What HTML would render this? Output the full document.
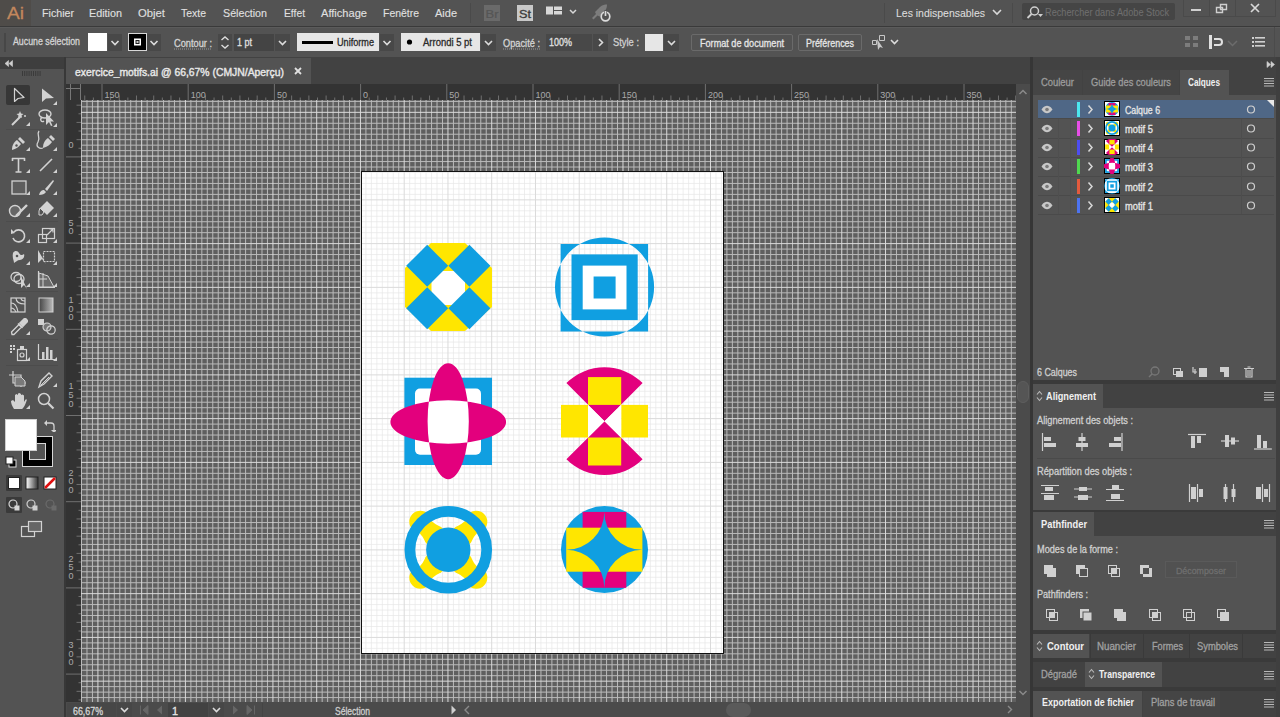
<!DOCTYPE html>
<html><head><meta charset="utf-8">
<style>
*{margin:0;padding:0;box-sizing:border-box}
html,body{width:1280px;height:717px;overflow:hidden;background:#535353}
body{position:relative;font-family:"Liberation Sans",sans-serif}
.a{position:absolute;display:block}
text{font-family:"Liberation Sans",sans-serif}
</style></head><body>
<div class="a" style="left:0px;top:0px;width:1280px;height:26px;background:#535353;"></div>
<div class="a" style="left:0px;top:26px;width:1280px;height:1px;background:#3a3a3a;"></div>
<div class="a" style="left:0px;top:27px;width:1280px;height:30px;background:#535353;"></div>
<div class="a" style="left:0px;top:57px;width:1280px;height:660px;background:#424242;"></div>
<div class="a" style="left:0px;top:57px;width:64px;height:12px;background:#3e3e3e;"></div>
<div class="a" style="left:0px;top:69px;width:64px;height:648px;background:#535353;"></div>
<div class="a" style="left:64px;top:57px;width:2px;height:660px;background:#383838;"></div>
<div class="a" style="left:66px;top:58px;width:245px;height:26px;background:#535353;"></div>
<div class="a" style="left:66px;top:84px;width:950px;height:16px;background:#333333;"></div>
<div class="a" style="left:66px;top:84px;width:15px;height:618px;background:#333333;"></div>
<div class="a" style="left:81px;top:100px;width:935px;height:602px;background:#5f5f5f;"></div>
<svg class="a" style="left:81px;top:100px;" width="935" height="602" viewBox="0 0 935 602"><path d="M0.50 0V602M5.97 0V602M11.44 0V602M22.38 0V602M27.85 0V602M33.32 0V602M38.79 0V602M44.26 0V602M49.73 0V602M55.19 0V602M66.13 0V602M71.60 0V602M77.07 0V602M82.54 0V602M88.01 0V602M93.48 0V602M98.95 0V602M109.89 0V602M115.36 0V602M120.83 0V602M126.30 0V602M131.77 0V602M137.24 0V602M142.71 0V602M153.65 0V602M159.12 0V602M164.59 0V602M170.05 0V602M175.52 0V602M180.99 0V602M186.46 0V602M197.40 0V602M202.87 0V602M208.34 0V602M213.81 0V602M219.28 0V602M224.75 0V602M230.22 0V602M241.16 0V602M246.63 0V602M252.10 0V602M257.57 0V602M263.04 0V602M268.51 0V602M273.98 0V602M284.91 0V602M290.38 0V602M295.85 0V602M301.32 0V602M306.79 0V602M312.26 0V602M317.73 0V602M328.67 0V602M334.14 0V602M339.61 0V602M345.08 0V602M350.55 0V602M356.02 0V602M361.49 0V602M372.43 0V602M377.90 0V602M383.37 0V602M388.83 0V602M394.30 0V602M399.77 0V602M405.24 0V602M416.18 0V602M421.65 0V602M427.12 0V602M432.59 0V602M438.06 0V602M443.53 0V602M449.00 0V602M459.94 0V602M465.41 0V602M470.88 0V602M476.35 0V602M481.82 0V602M487.29 0V602M492.75 0V602M503.69 0V602M509.16 0V602M514.63 0V602M520.10 0V602M525.57 0V602M531.04 0V602M536.51 0V602M547.45 0V602M552.92 0V602M558.39 0V602M563.86 0V602M569.33 0V602M574.80 0V602M580.27 0V602M591.21 0V602M596.68 0V602M602.14 0V602M607.61 0V602M613.08 0V602M618.55 0V602M624.02 0V602M634.96 0V602M640.43 0V602M645.90 0V602M651.37 0V602M656.84 0V602M662.31 0V602M667.78 0V602M678.72 0V602M684.19 0V602M689.66 0V602M695.13 0V602M700.60 0V602M706.07 0V602M711.53 0V602M722.47 0V602M727.94 0V602M733.41 0V602M738.88 0V602M744.35 0V602M749.82 0V602M755.29 0V602M766.23 0V602M771.70 0V602M777.17 0V602M782.64 0V602M788.11 0V602M793.58 0V602M799.05 0V602M809.99 0V602M815.46 0V602M820.92 0V602M826.39 0V602M831.86 0V602M837.33 0V602M842.80 0V602M853.74 0V602M859.21 0V602M864.68 0V602M870.15 0V602M875.62 0V602M881.09 0V602M886.56 0V602M897.50 0V602M902.97 0V602M908.44 0V602M913.91 0V602M919.38 0V602M924.85 0V602M930.32 0V602M0 1.40H935M0 6.87H935M0 17.81H935M0 23.28H935M0 28.75H935M0 34.22H935M0 39.69H935M0 45.16H935M0 50.63H935M0 61.56H935M0 67.03H935M0 72.50H935M0 77.97H935M0 83.44H935M0 88.91H935M0 94.38H935M0 105.32H935M0 110.79H935M0 116.26H935M0 121.73H935M0 127.20H935M0 132.67H935M0 138.14H935M0 149.08H935M0 154.55H935M0 160.02H935M0 165.49H935M0 170.95H935M0 176.42H935M0 181.89H935M0 192.83H935M0 198.30H935M0 203.77H935M0 209.24H935M0 214.71H935M0 220.18H935M0 225.65H935M0 236.59H935M0 242.06H935M0 247.53H935M0 253.00H935M0 258.47H935M0 263.94H935M0 269.41H935M0 280.34H935M0 285.81H935M0 291.28H935M0 296.75H935M0 302.22H935M0 307.69H935M0 313.16H935M0 324.10H935M0 329.57H935M0 335.04H935M0 340.51H935M0 345.98H935M0 351.45H935M0 356.92H935M0 367.86H935M0 373.33H935M0 378.80H935M0 384.26H935M0 389.73H935M0 395.20H935M0 400.67H935M0 411.61H935M0 417.08H935M0 422.55H935M0 428.02H935M0 433.49H935M0 438.96H935M0 444.43H935M0 455.37H935M0 460.84H935M0 466.31H935M0 471.78H935M0 477.25H935M0 482.72H935M0 488.19H935M0 499.12H935M0 504.59H935M0 510.06H935M0 515.53H935M0 521.00H935M0 526.47H935M0 531.94H935M0 542.88H935M0 548.35H935M0 553.82H935M0 559.29H935M0 564.76H935M0 570.23H935M0 575.70H935M0 586.64H935M0 592.11H935M0 597.58H935" stroke="#bababa" stroke-width="1" fill="none"/><path d="M16.91 0V602M60.66 0V602M104.42 0V602M148.18 0V602M191.93 0V602M235.69 0V602M279.44 0V602M323.20 0V602M366.96 0V602M410.71 0V602M454.47 0V602M498.22 0V602M541.98 0V602M585.74 0V602M629.49 0V602M673.25 0V602M717.00 0V602M760.76 0V602M804.52 0V602M848.27 0V602M892.03 0V602M0 12.34H935M0 56.09H935M0 99.85H935M0 143.61H935M0 187.36H935M0 231.12H935M0 274.88H935M0 318.63H935M0 362.39H935M0 406.14H935M0 449.90H935M0 493.65H935M0 537.41H935M0 581.17H935" stroke="#dadada" stroke-width="1" fill="none"/></svg>
<svg class="a" style="left:66px;top:84px;" width="950" height="16" viewBox="0 0 950 16"><path d="M18.76 11.5V16M27.38 13.5V16M36.00 0V16M44.62 13.5V16M53.24 11.5V16M61.86 13.5V16M70.48 11.5V16M79.10 13.5V16M87.72 11.5V16M96.34 13.5V16M104.96 11.5V16M113.58 13.5V16M122.20 0V16M130.82 13.5V16M139.44 11.5V16M148.06 13.5V16M156.68 11.5V16M165.30 13.5V16M173.92 11.5V16M182.54 13.5V16M191.16 11.5V16M199.78 13.5V16M208.40 0V16M217.02 13.5V16M225.64 11.5V16M234.26 13.5V16M242.88 11.5V16M251.50 13.5V16M260.12 11.5V16M268.74 13.5V16M277.36 11.5V16M285.98 13.5V16M294.60 0V16M303.22 13.5V16M311.84 11.5V16M320.46 13.5V16M329.08 11.5V16M337.70 13.5V16M346.32 11.5V16M354.94 13.5V16M363.56 11.5V16M372.18 13.5V16M380.80 0V16M389.42 13.5V16M398.04 11.5V16M406.66 13.5V16M415.28 11.5V16M423.90 13.5V16M432.52 11.5V16M441.14 13.5V16M449.76 11.5V16M458.38 13.5V16M467.00 0V16M475.62 13.5V16M484.24 11.5V16M492.86 13.5V16M501.48 11.5V16M510.10 13.5V16M518.72 11.5V16M527.34 13.5V16M535.96 11.5V16M544.58 13.5V16M553.20 0V16M561.82 13.5V16M570.44 11.5V16M579.06 13.5V16M587.68 11.5V16M596.30 13.5V16M604.92 11.5V16M613.54 13.5V16M622.16 11.5V16M630.78 13.5V16M639.40 0V16M648.02 13.5V16M656.64 11.5V16M665.26 13.5V16M673.88 11.5V16M682.50 13.5V16M691.12 11.5V16M699.74 13.5V16M708.36 11.5V16M716.98 13.5V16M725.60 0V16M734.22 13.5V16M742.84 11.5V16M751.46 13.5V16M760.08 11.5V16M768.70 13.5V16M777.32 11.5V16M785.94 13.5V16M794.56 11.5V16M803.18 13.5V16M811.80 0V16M820.42 13.5V16M829.04 11.5V16M837.66 13.5V16M846.28 11.5V16M854.90 13.5V16M863.52 11.5V16M872.14 13.5V16M880.76 11.5V16M889.38 13.5V16M898.00 0V16M906.62 13.5V16M915.24 11.5V16M923.86 13.5V16M932.48 11.5V16M941.10 13.5V16M949.72 11.5V16" stroke="#707070" stroke-width="1" fill="none"/></svg>
<svg class="a" style="left:66px;top:84px;" width="15" height="618" viewBox="0 0 15 618"><path d="M10.5 21.18H15M12.5 29.80H15M10.5 38.42H15M12.5 47.04H15M10.5 55.66H15M12.5 64.28H15M0 72.90H15M12.5 81.52H15M10.5 90.14H15M12.5 98.76H15M10.5 107.38H15M12.5 116.00H15M10.5 124.62H15M12.5 133.24H15M10.5 141.86H15M12.5 150.48H15M0 159.10H15M12.5 167.72H15M10.5 176.34H15M12.5 184.96H15M10.5 193.58H15M12.5 202.20H15M10.5 210.82H15M12.5 219.44H15M10.5 228.06H15M12.5 236.68H15M0 245.30H15M12.5 253.92H15M10.5 262.54H15M12.5 271.16H15M10.5 279.78H15M12.5 288.40H15M10.5 297.02H15M12.5 305.64H15M10.5 314.26H15M12.5 322.88H15M0 331.50H15M12.5 340.12H15M10.5 348.74H15M12.5 357.36H15M10.5 365.98H15M12.5 374.60H15M10.5 383.22H15M12.5 391.84H15M10.5 400.46H15M12.5 409.08H15M0 417.70H15M12.5 426.32H15M10.5 434.94H15M12.5 443.56H15M10.5 452.18H15M12.5 460.80H15M10.5 469.42H15M12.5 478.04H15M10.5 486.66H15M12.5 495.28H15M0 503.90H15M12.5 512.52H15M10.5 521.14H15M12.5 529.76H15M10.5 538.38H15M12.5 547.00H15M10.5 555.62H15M12.5 564.24H15M10.5 572.86H15M12.5 581.48H15M0 590.10H15M12.5 598.72H15M10.5 607.34H15M12.5 615.96H15" stroke="#707070" stroke-width="1" fill="none"/></svg>
<svg class="a" style="left:66px;top:84px;" width="15" height="16" viewBox="0 0 15 16"><path d="M4.5 0V16M0 4.5H15M14.5 0V16" stroke="#777" stroke-width="1" fill="none"/></svg>
<div class="a" style="left:361px;top:171px;width:363px;height:483px;background:#fff;border:1px solid #111"></div>
<svg class="a" style="left:362px;top:172px;" width="361" height="481" viewBox="0 0 361 481"><path d="M3.91 0V481M9.38 0V481M14.85 0V481M20.32 0V481M25.79 0V481M31.26 0V481M36.73 0V481M47.67 0V481M53.14 0V481M58.61 0V481M64.08 0V481M69.55 0V481M75.02 0V481M80.49 0V481M91.43 0V481M96.90 0V481M102.37 0V481M107.83 0V481M113.30 0V481M118.77 0V481M124.24 0V481M135.18 0V481M140.65 0V481M146.12 0V481M151.59 0V481M157.06 0V481M162.53 0V481M168.00 0V481M178.94 0V481M184.41 0V481M189.88 0V481M195.35 0V481M200.82 0V481M206.29 0V481M211.75 0V481M222.69 0V481M228.16 0V481M233.63 0V481M239.10 0V481M244.57 0V481M250.04 0V481M255.51 0V481M266.45 0V481M271.92 0V481M277.39 0V481M282.86 0V481M288.33 0V481M293.80 0V481M299.27 0V481M310.21 0V481M315.68 0V481M321.14 0V481M326.61 0V481M332.08 0V481M337.55 0V481M343.02 0V481M353.96 0V481M359.43 0V481M0 0.50H361M0 5.97H361M0 11.44H361M0 16.91H361M0 22.38H361M0 33.32H361M0 38.79H361M0 44.26H361M0 49.73H361M0 55.20H361M0 60.67H361M0 66.14H361M0 77.08H361M0 82.55H361M0 88.02H361M0 93.49H361M0 98.95H361M0 104.42H361M0 109.89H361M0 120.83H361M0 126.30H361M0 131.77H361M0 137.24H361M0 142.71H361M0 148.18H361M0 153.65H361M0 164.59H361M0 170.06H361M0 175.53H361M0 181.00H361M0 186.47H361M0 191.94H361M0 197.41H361M0 208.34H361M0 213.81H361M0 219.28H361M0 224.75H361M0 230.22H361M0 235.69H361M0 241.16H361M0 252.10H361M0 257.57H361M0 263.04H361M0 268.51H361M0 273.98H361M0 279.45H361M0 284.92H361M0 295.86H361M0 301.33H361M0 306.80H361M0 312.26H361M0 317.73H361M0 323.20H361M0 328.67H361M0 339.61H361M0 345.08H361M0 350.55H361M0 356.02H361M0 361.49H361M0 366.96H361M0 372.43H361M0 383.37H361M0 388.84H361M0 394.31H361M0 399.78H361M0 405.25H361M0 410.72H361M0 416.19H361M0 427.12H361M0 432.59H361M0 438.06H361M0 443.53H361M0 449.00H361M0 454.47H361M0 459.94H361M0 470.88H361M0 476.35H361" stroke="#e6e6e6" stroke-width="0.7" fill="none"/><path d="M42.20 0V481M85.96 0V481M129.71 0V481M173.47 0V481M217.22 0V481M260.98 0V481M304.74 0V481M348.49 0V481M0 27.85H361M0 71.61H361M0 115.36H361M0 159.12H361M0 202.88H361M0 246.63H361M0 290.39H361M0 334.14H361M0 377.90H361M0 421.65H361M0 465.41H361" stroke="#dadada" stroke-width="1" fill="none"/></svg>
<svg class="a" style="left:0px;top:0px;" width="1280" height="717" viewBox="0 0 1280 717"><polygon points="431,243 465,243 492,268 492,307 465,331 431,331 405,307 405,268" fill="#ffe600"/>
<rect x="431.5" y="271" width="33.5" height="34" fill="#fff"/>
<g fill="#109fe1">
<polygon points="406.2,265.8 427.2,244.8 448.2,265.8 427.2,286.8"/>
<polygon points="448.4,265.8 469.4,244.8 490.4,265.8 469.4,286.8"/>
<polygon points="406.2,308.2 427.2,287.2 448.2,308.2 427.2,329.2"/>
<polygon points="448.4,308.2 469.4,287.2 490.4,308.2 469.4,329.2"/>
</g><path fill-rule="evenodd" fill="#109fe1" d="M560.6 244H648.1V331.4H560.6Z M654.1 287 A49.5 49.5 0 1 1 555 287 A49.5 49.5 0 1 1 654.1 287Z"/>
<rect x="571.5" y="254.4" width="66.2" height="65.7" fill="#109fe1"/>
<rect x="582.7" y="265.6" width="43.8" height="43.8" fill="#fff"/>
<rect x="593.6" y="276.5" width="22" height="22" fill="#109fe1"/><rect x="404.4" y="377.7" width="87.6" height="87.3" fill="#109fe1"/>
<rect x="415" y="388.5" width="66" height="66.2" rx="5" fill="#fff"/>
<path fill-rule="evenodd" fill="#e3007d" d="M468.8 421.2A20.6 58 0 1 1 427.6 421.2A20.6 58 0 1 1 468.8 421.2Z M506.1 422A57.8 21.7 0 1 1 390.4 422A57.8 21.7 0 1 1 506.1 422Z"/><path fill="#e3007d" d="M604.5 421.2L566.4 383.1A54 54 0 0 1 642.6 383.1Z M604.5 421.2L566.4 459.3A54 54 0 0 0 642.6 459.3Z"/>
<g fill="#ffe600">
<rect x="588" y="377.1" width="33.2" height="27.8"/>
<rect x="561" y="404.9" width="27" height="32.6"/>
<rect x="621.2" y="404.9" width="26.8" height="32.6"/>
<rect x="588" y="437.5" width="33.2" height="28"/>
</g>
<path fill="#fff" d="M588 404.9L604.5 421.2L588 437.5Z M621.2 404.9L604.5 421.2L621.2 437.5Z"/><mask id="c5" maskUnits="userSpaceOnUse" x="0" y="0" width="1280" height="717"><path d="M420.3 521.8L476.3 577.8M476.3 521.8L420.3 577.8" stroke="#fff" stroke-width="23" stroke-linecap="round" fill="none"/></mask>
<path d="M420.3 521.8L476.3 577.8M476.3 521.8L420.3 577.8" stroke="#ffe600" stroke-width="22" stroke-linecap="round" fill="none"/>
<g mask="url(#c5)" fill="#fff">
<circle cx="448.3" cy="504.99999999999994" r="23.1"/><circle cx="448.3" cy="594.5999999999999" r="23.1"/><circle cx="403.5" cy="549.8" r="23.1"/><circle cx="493.1" cy="549.8" r="23.1"/>
</g>
<circle cx="448.3" cy="549.8" r="38.4" fill="none" stroke="#109fe1" stroke-width="10.8"/>
<circle cx="448.3" cy="549.8" r="22.2" fill="#109fe1"/><circle cx="604.5" cy="549.6" r="43.5" fill="#109fe1"/>
<rect x="582.6" y="511.9" width="43.7" height="75.9" fill="#e3007d"/>
<rect x="566.2" y="527.7" width="76.2" height="44" fill="#ffe600"/>
<path fill="#109fe1" d="M604.3 511.9A38.2 37.9 0 0 0 642.4 549.8A38.2 37.9 0 0 0 604.3 587.8A38.2 37.9 0 0 0 566.2 549.8A38.2 37.9 0 0 0 604.3 511.9Z"/></svg>
<div class="a" style="left:0px;top:0px;width:31px;height:26px;background:#4f4c49;"></div>
<div class="a" style="left:470px;top:3px;width:1px;height:20px;background:#4a4a4a;"></div>
<div class="a" style="left:484px;top:5px;width:16px;height:16px;background:#6a6a6a;"></div>
<div class="a" style="left:517px;top:5px;width:16px;height:16px;background:#c8c8c8;"></div>
<svg class="a" style="left:544px;top:4px;" width="36" height="18" viewBox="0 0 36 18"><path d="M2 2.5h7v8H2zM10 2.5h8v3.5h-8zM10 7h8v3.5h-8z" fill="#d8d8d8"/><path d="M26 6l3 3 3-3" stroke="#d8d8d8" stroke-width="1.5" fill="none"/></svg>
<svg class="a" style="left:590px;top:2px;" width="24" height="22" viewBox="0 0 24 22"><path d="M2 16L6 12L5 10L10 5C12 3 15 2.5 17 2.5C17 4.5 16.5 7.5 14.5 9.5L9.5 14.5L7.5 13.5L3.5 17.5Z" fill="#7c7c7c"/><circle cx="15.5" cy="14.5" r="4.3" stroke="#dcdcdc" stroke-width="1.7" fill="#535353"/><path d="M15.5 8.5v5" stroke="#535353" stroke-width="3"/><path d="M15.5 9v5" stroke="#dcdcdc" stroke-width="1.7"/></svg>
<div class="a" style="left:884px;top:3px;width:1px;height:20px;background:#4a4a4a;"></div>
<svg class="a" style="left:990px;top:6px;" width="14" height="12" viewBox="0 0 14 12"><path d="M3 4l4 4 4-4" stroke="#d8d8d8" stroke-width="1.6" fill="none"/></svg>
<div class="a" style="left:1012px;top:3px;width:1px;height:20px;background:#4a4a4a;"></div>
<div class="a" style="left:1022px;top:3px;width:153px;height:17px;background:#454545;border-radius:2px"></div>
<svg class="a" style="left:1026px;top:5px;" width="18" height="14" viewBox="0 0 18 14"><circle cx="8.5" cy="6" r="4" stroke="#cfcfcf" stroke-width="1.5" fill="none"/><path d="M5.5 9l-4 4" stroke="#cfcfcf" stroke-width="1.8"/><path d="M12 9h5l-2.5 3z" fill="#cfcfcf"/></svg>
<div class="a" style="left:1183px;top:0px;width:1px;height:16px;background:#4a4a4a;"></div>
<div class="a" style="left:1209px;top:0px;width:1px;height:16px;background:#4a4a4a;"></div>
<div class="a" style="left:1235px;top:0px;width:1px;height:16px;background:#4a4a4a;"></div>
<div class="a" style="left:1275px;top:0px;width:1px;height:16px;background:#4a4a4a;"></div>
<div class="a" style="left:1183px;top:16px;width:93px;height:1px;background:#4a4a4a;"></div>
<div class="a" style="left:1191px;top:9px;width:10px;height:2px;background:#d0d0d0;"></div>
<svg class="a" style="left:1214px;top:2px;" width="16" height="14" viewBox="0 0 16 14"><path d="M6.5 2.5h6v5h-6zM2.5 5.5h6v5h-6z" stroke="#cfcfcf" stroke-width="1.4" fill="#535353"/></svg>
<svg class="a" style="left:1249px;top:2px;" width="12" height="12" viewBox="0 0 12 12"><path d="M2 2l8 8M10 2l-8 8" stroke="#d8d8d8" stroke-width="1.7"/></svg>
<div class="a" style="left:0px;top:27px;width:1280px;height:1px;background:#5b5b5b;"></div>
<div class="a" style="left:4px;top:33px;width:2px;height:19px;background:#474747;"></div>
<div class="a" style="left:88px;top:33px;width:19px;height:18px;background:#ffffff;"></div>
<div class="a" style="left:108px;top:34px;width:14px;height:17px;background:#484848;"></div>
<svg class="a" style="left:108px;top:34px;" width="14" height="17" viewBox="0 0 14 17"><path d="M3.5 7.0l3.5 3.5 3.5-3.5" stroke="#dcdcdc" stroke-width="1.6" fill="none"/></svg>
<div class="a" style="left:128px;top:33px;width:19px;height:18px;background:#000;border:1px solid #d8d8d8"></div>
<svg class="a" style="left:128px;top:33px;" width="19" height="18" viewBox="0 0 19 18"><rect x="6" y="5.5" width="7" height="7" fill="#fff"/><rect x="7.5" y="7" width="4" height="4" fill="#222"/><rect x="8.5" y="8" width="2" height="2" fill="#ccc"/></svg>
<div class="a" style="left:147px;top:34px;width:14px;height:17px;background:#484848;"></div>
<svg class="a" style="left:147px;top:34px;" width="14" height="17" viewBox="0 0 14 17"><path d="M3.5 7.0l3.5 3.5 3.5-3.5" stroke="#dcdcdc" stroke-width="1.6" fill="none"/></svg>
<svg class="a" style="left:174px;top:48px;" width="38" height="2" viewBox="0 0 38 2"><path d="M0 1H38" stroke="#9a9a9a" stroke-width="1" stroke-dasharray="1 1"/></svg>
<div class="a" style="left:218px;top:34px;width:14px;height:17px;background:#484848;"></div>
<svg class="a" style="left:218px;top:34px;" width="14" height="17" viewBox="0 0 14 17"><path d="M3.5 6l3.5-3 3.5 3M3.5 11l3.5 3 3.5-3" stroke="#dcdcdc" stroke-width="1.4" fill="none"/></svg>
<div class="a" style="left:234px;top:34px;width:40px;height:17px;background:#444;"></div>
<div class="a" style="left:275px;top:34px;width:15px;height:17px;background:#484848;"></div>
<svg class="a" style="left:275px;top:34px;" width="15" height="17" viewBox="0 0 15 17"><path d="M4.0 7.0l3.5 3.5 3.5-3.5" stroke="#dcdcdc" stroke-width="1.6" fill="none"/></svg>
<div class="a" style="left:297px;top:33px;width:82px;height:18px;background:#e6e6e6;"></div>
<div class="a" style="left:302px;top:41px;width:31px;height:3px;background:#000;"></div>
<div class="a" style="left:380px;top:34px;width:14px;height:17px;background:#484848;"></div>
<svg class="a" style="left:380px;top:34px;" width="14" height="17" viewBox="0 0 14 17"><path d="M3.5 7.0l3.5 3.5 3.5-3.5" stroke="#dcdcdc" stroke-width="1.6" fill="none"/></svg>
<div class="a" style="left:401px;top:33px;width:79px;height:18px;background:#e6e6e6;"></div>
<svg class="a" style="left:405px;top:37px;" width="10" height="10" viewBox="0 0 10 10"><circle cx="4.5" cy="5" r="2.6" fill="#000"/></svg>
<div class="a" style="left:481px;top:34px;width:15px;height:17px;background:#484848;"></div>
<svg class="a" style="left:481px;top:34px;" width="15" height="17" viewBox="0 0 15 17"><path d="M4.0 7.0l3.5 3.5 3.5-3.5" stroke="#dcdcdc" stroke-width="1.6" fill="none"/></svg>
<svg class="a" style="left:503px;top:48px;" width="37" height="2" viewBox="0 0 37 2"><path d="M0 1H37" stroke="#9a9a9a" stroke-width="1" stroke-dasharray="1 1"/></svg>
<div class="a" style="left:546px;top:34px;width:46px;height:17px;background:#484848;"></div>
<div class="a" style="left:593px;top:34px;width:15px;height:17px;background:#484848;"></div>
<svg class="a" style="left:593px;top:34px;" width="15" height="17" viewBox="0 0 15 17"><path d="M6 5l3.5 3.5L6 12" stroke="#dcdcdc" stroke-width="1.6" fill="none"/></svg>
<div class="a" style="left:645px;top:34px;width:18px;height:17px;background:#e6e6e6;"></div>
<div class="a" style="left:664px;top:34px;width:15px;height:17px;background:#484848;"></div>
<svg class="a" style="left:664px;top:34px;" width="15" height="17" viewBox="0 0 15 17"><path d="M4.0 7.0l3.5 3.5 3.5-3.5" stroke="#dcdcdc" stroke-width="1.6" fill="none"/></svg>
<div class="a" style="left:691px;top:34px;width:102px;height:17px;background:#535353;border:1px solid #6a6a6a;border-radius:2px"></div>
<div class="a" style="left:798px;top:34px;width:64px;height:17px;background:#535353;border:1px solid #6a6a6a;border-radius:2px"></div>
<svg class="a" style="left:869px;top:33px;" width="34" height="18" viewBox="0 0 34 18"><path d="M3.5 7.5h4v4h-4zM10.5 2.5h5v5h-5z" stroke="#c8c8c8" stroke-width="1" fill="none"/><path d="M8 6l6 9-3-1-2 3z" fill="#c8c8c8"/><path d="M22 7l3.5 3.5L29 7" stroke="#dcdcdc" stroke-width="1.6" fill="none"/></svg>
<svg class="a" style="left:1184px;top:35px;" width="16" height="13" viewBox="0 0 16 13"><g fill="#7c7c7c"><rect x="1" y="1" width="5" height="4"/><rect x="9" y="1" width="5" height="4"/><rect x="1" y="8" width="5" height="4"/><rect x="9" y="8" width="5" height="4"/></g></svg>
<svg class="a" style="left:1208px;top:34px;" width="16" height="16" viewBox="0 0 16 16"><path d="M1 1h3v14H1z" fill="#e0e0e0"/><path d="M6 5h5a3 3 0 0 1 0 6H6" stroke="#e0e0e0" stroke-width="2" fill="none"/></svg>
<svg class="a" style="left:1226px;top:38px;" width="14" height="10" viewBox="0 0 14 10"><path d="M2 3l4.5 4.5L11 3" stroke="#6c6c6c" stroke-width="1.5" fill="none"/></svg>
<svg class="a" style="left:1251px;top:35px;" width="16" height="14" viewBox="0 0 16 14"><g fill="#d0d0d0"><rect x="1" y="2" width="2" height="2"/><rect x="4" y="2" width="10" height="1.6"/><rect x="1" y="6" width="2" height="2"/><rect x="4" y="6" width="10" height="1.6"/><rect x="1" y="10" width="2" height="2"/><rect x="4" y="10" width="10" height="1.6"/></g></svg>
<div class="a" style="left:1274px;top:27px;width:1px;height:30px;background:#4b4b4b;"></div>
<svg class="a" style="left:292px;top:65px;" width="12" height="12" viewBox="0 0 12 12"><path d="M3 3l6 6M9 3l-6 6" stroke="#e0e0e0" stroke-width="1.8"/></svg>
<svg class="a" style="left:4px;top:59px;" width="10" height="9" viewBox="0 0 10 9"><path d="M4.5 1.5L1 4.5L4.5 7.5ZM8.5 1.5L5 4.5L8.5 7.5Z" fill="#cfcfcf" stroke="#cfcfcf" stroke-width="0.6"/></svg>
<svg class="a" style="left:22px;top:71px;" width="20" height="6" viewBox="0 0 20 6"><rect x="0.0" y="0" width="1" height="5" fill="#3a3a3a"/><rect x="2.2" y="0" width="1" height="5" fill="#3a3a3a"/><rect x="4.4" y="0" width="1" height="5" fill="#3a3a3a"/><rect x="6.6" y="0" width="1" height="5" fill="#3a3a3a"/><rect x="8.8" y="0" width="1" height="5" fill="#3a3a3a"/><rect x="11.0" y="0" width="1" height="5" fill="#3a3a3a"/><rect x="13.2" y="0" width="1" height="5" fill="#3a3a3a"/><rect x="15.4" y="0" width="1" height="5" fill="#3a3a3a"/><rect x="17.6" y="0" width="1" height="5" fill="#3a3a3a"/></svg>
<div class="a" style="left:6px;top:85px;width:24px;height:20px;background:#373737;border-radius:2px"></div>
<svg class="a" style="left:10px;top:87px;" width="16" height="17" viewBox="0 0 16 17"><path d="M4.5 1.5V14.5L8 11.5L14 10.5Z" stroke="#d2d2d2" stroke-width="1.2" fill="none" stroke-linejoin="round"/></svg>
<svg class="a" style="left:40px;top:87px;" width="18" height="17" viewBox="0 0 18 17"><path d="M2 1.5V15L6 11.5L14 11Z" fill="#d2d2d2"/></svg>
<svg class="a" style="left:10px;top:109px;" width="18" height="18" viewBox="0 0 18 18"><path d="M2 16L11 7" stroke="#d2d2d2" stroke-width="2"/><path d="M10 2l1 2.5 2.5.5-2 1.5.5 2.5-2-1.5-2 1.5.5-2.5-2-1.5 2.5-.5z" fill="#d2d2d2"/><circle cx="15" cy="7" r="1" fill="#d2d2d2"/></svg>
<svg class="a" style="left:37px;top:108px;" width="20" height="19" viewBox="0 0 20 19"><ellipse cx="8" cy="6" rx="6" ry="4" stroke="#d2d2d2" stroke-width="1.4" fill="none"/><path d="M5 9c-3 3 0 6 2 4" stroke="#d2d2d2" stroke-width="1.3" fill="none"/><path d="M9 5V17L12 14L14 18L15.5 17.5L13.5 13.5H17Z" fill="#d2d2d2"/></svg>
<svg class="a" style="left:10px;top:135px;" width="17" height="17" viewBox="0 0 17 17"><path d="M2 15C2 10 4 7 7 5L11 9C9 12 6 14 2 15Z" fill="#d2d2d2"/><path d="M8 4L10 2L15 7L13 9Z" fill="#d2d2d2"/><circle cx="6.5" cy="10.5" r="1.2" fill="#535353"/></svg>
<svg class="a" style="left:35px;top:130px;" width="20" height="22" viewBox="0 0 20 22"><path d="M4 1c-3 4 2 6-1 11s2 7 5 6" stroke="#d2d2d2" stroke-width="1.3" fill="none"/><path d="M8 18C8 13 10 10 13 8L17 12C15 15 12 17 8 18Z" fill="#d2d2d2"/><path d="M14 7L16 5L20 9L18 11Z" fill="#d2d2d2"/></svg>
<svg class="a" style="left:11px;top:157px;" width="15" height="16" viewBox="0 0 15 16"><path d="M1 1.5H14M7.5 1.5V15M4.5 15H10.5M1.5 1V4M13.5 1V4" stroke="#d2d2d2" stroke-width="1.6" fill="none"/></svg>
<svg class="a" style="left:38px;top:157px;" width="16" height="16" viewBox="0 0 16 16"><path d="M2 14L14 2" stroke="#d2d2d2" stroke-width="1.6"/></svg>
<svg class="a" style="left:11px;top:180px;" width="16" height="15" viewBox="0 0 16 15"><rect x="1" y="1" width="14" height="13" stroke="#d2d2d2" stroke-width="1.3" fill="#5e5e5e"/></svg>
<svg class="a" style="left:37px;top:179px;" width="18" height="17" viewBox="0 0 18 17"><path d="M2 16C3 12 5 11 7 11L9 13C8 15 5 16 2 16Z" fill="#d2d2d2"/><path d="M8 10L16 1L17 2L10 12Z" fill="#d2d2d2"/></svg>
<svg class="a" style="left:8px;top:202px;" width="21" height="16" viewBox="0 0 21 16"><circle cx="7" cy="9" r="5.5" stroke="#d2d2d2" stroke-width="1.4" fill="#666"/><path d="M8 14L19 3" stroke="#d2d2d2" stroke-width="2.4"/></svg>
<svg class="a" style="left:38px;top:200px;" width="17" height="17" viewBox="0 0 17 17"><path d="M9 1L16 8L9 15L2 8Z" fill="#d2d2d2"/><path d="M2 8L6 12L4 15H1V11Z" stroke="#d2d2d2" stroke-width="1" fill="#535353"/></svg>
<svg class="a" style="left:10px;top:227px;" width="17" height="18" viewBox="0 0 17 18"><path d="M4 5A6 6 0 1 1 3 11" stroke="#d2d2d2" stroke-width="1.6" fill="none"/><path d="M1 2L5 6L1 7Z" fill="#d2d2d2"/></svg>
<svg class="a" style="left:37px;top:226px;" width="20" height="19" viewBox="0 0 20 19"><rect x="1.5" y="8.5" width="8" height="8" stroke="#d2d2d2" stroke-width="1.2" fill="none"/><rect x="5.5" y="2.5" width="12" height="10" stroke="#d2d2d2" stroke-width="1.2" fill="none"/><path d="M10 9L16 3M12.5 3H16V6.5" stroke="#d2d2d2" stroke-width="1.2" fill="none"/></svg>
<svg class="a" style="left:10px;top:248px;" width="18" height="17" viewBox="0 0 18 17"><path d="M3 5c2-3 5-2 6 0s3 3 5 1c1 3-1 6-4 6s-4 2-6 3c0-3-2-5-1-10z" fill="#d2d2d2"/><circle cx="7" cy="8" r="1.3" fill="#535353"/></svg>
<svg class="a" style="left:37px;top:248px;" width="20" height="18" viewBox="0 0 20 18"><path d="M1 2V15L5 11L9 16Z" fill="#d2d2d2"/><rect x="6.5" y="3.5" width="11" height="10" stroke="#d2d2d2" stroke-width="1.2" stroke-dasharray="2 1" fill="none"/></svg>
<svg class="a" style="left:10px;top:270px;" width="19" height="19" viewBox="0 0 19 19"><ellipse cx="6" cy="7" rx="5" ry="4.5" stroke="#d2d2d2" stroke-width="1.3" fill="none"/><ellipse cx="9" cy="9" rx="5" ry="4.5" stroke="#d2d2d2" stroke-width="1.3" fill="none"/><path d="M11 6V18L14 15L17 19Z" fill="#d2d2d2"/></svg>
<svg class="a" style="left:37px;top:270px;" width="20" height="19" viewBox="0 0 20 19"><path d="M1.5 1V17.5H18" stroke="#d2d2d2" stroke-width="1.2" fill="none"/><path d="M2 3L11 6L17 17H2Z" stroke="#d2d2d2" stroke-width="1" fill="#6a6a6a"/><path d="M2 9H10M6 3V17" stroke="#d2d2d2" stroke-width="1"/></svg>
<svg class="a" style="left:10px;top:297px;" width="16" height="16" viewBox="0 0 16 16"><rect x="1" y="1" width="14" height="14" stroke="#d2d2d2" stroke-width="1.2" fill="none"/><path d="M1 6c4 0 6 3 7 9M1 11c3 0 4 2 5 4M6 1c0 4 4 6 9 6M11 1c0 2 2 3 4 3" stroke="#d2d2d2" stroke-width="1.1" fill="none"/></svg>
<svg class="a" style="left:38px;top:297px;" width="16" height="16" viewBox="0 0 16 16"><defs><linearGradient id="gt"><stop offset="0" stop-color="#444"/><stop offset="1" stop-color="#bbb"/></linearGradient></defs><rect x="1" y="1" width="14" height="14" fill="url(#gt)" stroke="#d2d2d2" stroke-width="1"/></svg>
<svg class="a" style="left:9px;top:318px;" width="19" height="19" viewBox="0 0 19 19"><path d="M3 16.5L2.5 14L10 6.5L12.5 9L5 16.5Z" stroke="#d2d2d2" stroke-width="1.3" fill="none" stroke-linejoin="round"/><path d="M9 5.5L13.5 10M11 5L14.5 1.5A2 2 0 0 1 17.5 4.5L14 8Z" stroke="#d2d2d2" stroke-width="1.6" fill="#d2d2d2"/></svg>
<svg class="a" style="left:37px;top:318px;" width="19" height="18" viewBox="0 0 19 18"><rect x="1" y="1" width="6" height="6" fill="#d2d2d2"/><circle cx="10" cy="9" r="4" stroke="#d2d2d2" stroke-width="1.2" fill="#777"/><circle cx="14" cy="12" r="4.2" stroke="#d2d2d2" stroke-width="1.2" fill="none"/></svg>
<svg class="a" style="left:9px;top:344px;" width="19" height="18" viewBox="0 0 19 18"><g fill="#d2d2d2"><rect x="1" y="1" width="2" height="2"/><rect x="4" y="1" width="2" height="2"/><rect x="1" y="4" width="2" height="2"/><rect x="4" y="4" width="2" height="2"/><rect x="1" y="7" width="2" height="2"/></g><rect x="8.5" y="5.5" width="9" height="11" stroke="#d2d2d2" stroke-width="1.2" fill="none"/><rect x="11" y="2" width="4" height="3.5" fill="#d2d2d2"/><circle cx="13" cy="11" r="2" stroke="#d2d2d2" stroke-width="1.2" fill="none"/></svg>
<svg class="a" style="left:37px;top:343px;" width="19" height="18" viewBox="0 0 19 18"><path d="M1.5 1V16.5H18" stroke="#d2d2d2" stroke-width="1.2" fill="none"/><rect x="5" y="9" width="2.5" height="7" fill="#d2d2d2"/><rect x="9" y="4" width="2.5" height="12" fill="#d2d2d2"/><rect x="13" y="7" width="2.5" height="9" fill="#d2d2d2"/></svg>
<svg class="a" style="left:9px;top:371px;" width="19" height="17" viewBox="0 0 19 17"><path d="M4 0V12H17M0 4H12V16" stroke="#d2d2d2" stroke-width="1.2" fill="none"/><path d="M6 6H12L16 10V15H6Z" fill="#7a7a7a" stroke="#d2d2d2" stroke-width="1"/></svg>
<svg class="a" style="left:37px;top:370px;" width="19" height="19" viewBox="0 0 19 19"><path d="M2 17L4 11L12 3L15 6L7 14Z" stroke="#d2d2d2" stroke-width="1.4" fill="none"/><path d="M4 15L12 7" stroke="#d2d2d2" stroke-width="1"/></svg>
<svg class="a" style="left:10px;top:392px;" width="17" height="18" viewBox="0 0 17 18"><path d="M4 17C2 14 1 11 1 9L3 8L5 10V3L6.5 2L8 3V8V1.5L9.5 1L11 2V8V3L12.5 2.5L14 3.5V10L15.5 7.5H17C16 11 14 16 12 17Z" fill="#d2d2d2"/></svg>
<svg class="a" style="left:37px;top:392px;" width="18" height="18" viewBox="0 0 18 18"><circle cx="7" cy="7" r="5.5" stroke="#d2d2d2" stroke-width="1.5" fill="none"/><path d="M11 11L16.5 16.5" stroke="#d2d2d2" stroke-width="2.2"/></svg>
<svg class="a" style="left:26px;top:147px;" width="4" height="4" viewBox="0 0 4 4"><path d="M4 0V4H0Z" fill="#d2d2d2"/></svg>
<svg class="a" style="left:53px;top:147px;" width="4" height="4" viewBox="0 0 4 4"><path d="M4 0V4H0Z" fill="#d2d2d2"/></svg>
<svg class="a" style="left:26px;top:169px;" width="4" height="4" viewBox="0 0 4 4"><path d="M4 0V4H0Z" fill="#d2d2d2"/></svg>
<svg class="a" style="left:53px;top:169px;" width="4" height="4" viewBox="0 0 4 4"><path d="M4 0V4H0Z" fill="#d2d2d2"/></svg>
<svg class="a" style="left:26px;top:191px;" width="4" height="4" viewBox="0 0 4 4"><path d="M4 0V4H0Z" fill="#d2d2d2"/></svg>
<svg class="a" style="left:53px;top:191px;" width="4" height="4" viewBox="0 0 4 4"><path d="M4 0V4H0Z" fill="#d2d2d2"/></svg>
<svg class="a" style="left:26px;top:213px;" width="4" height="4" viewBox="0 0 4 4"><path d="M4 0V4H0Z" fill="#d2d2d2"/></svg>
<svg class="a" style="left:53px;top:213px;" width="4" height="4" viewBox="0 0 4 4"><path d="M4 0V4H0Z" fill="#d2d2d2"/></svg>
<svg class="a" style="left:26px;top:239px;" width="4" height="4" viewBox="0 0 4 4"><path d="M4 0V4H0Z" fill="#d2d2d2"/></svg>
<svg class="a" style="left:53px;top:239px;" width="4" height="4" viewBox="0 0 4 4"><path d="M4 0V4H0Z" fill="#d2d2d2"/></svg>
<svg class="a" style="left:26px;top:261px;" width="4" height="4" viewBox="0 0 4 4"><path d="M4 0V4H0Z" fill="#d2d2d2"/></svg>
<svg class="a" style="left:53px;top:261px;" width="4" height="4" viewBox="0 0 4 4"><path d="M4 0V4H0Z" fill="#d2d2d2"/></svg>
<svg class="a" style="left:26px;top:283px;" width="4" height="4" viewBox="0 0 4 4"><path d="M4 0V4H0Z" fill="#d2d2d2"/></svg>
<svg class="a" style="left:53px;top:283px;" width="4" height="4" viewBox="0 0 4 4"><path d="M4 0V4H0Z" fill="#d2d2d2"/></svg>
<svg class="a" style="left:26px;top:331px;" width="4" height="4" viewBox="0 0 4 4"><path d="M4 0V4H0Z" fill="#d2d2d2"/></svg>
<svg class="a" style="left:26px;top:357px;" width="4" height="4" viewBox="0 0 4 4"><path d="M4 0V4H0Z" fill="#d2d2d2"/></svg>
<svg class="a" style="left:53px;top:357px;" width="4" height="4" viewBox="0 0 4 4"><path d="M4 0V4H0Z" fill="#d2d2d2"/></svg>
<svg class="a" style="left:26px;top:405px;" width="4" height="4" viewBox="0 0 4 4"><path d="M4 0V4H0Z" fill="#d2d2d2"/></svg>
<svg class="a" style="left:53px;top:383px;" width="4" height="4" viewBox="0 0 4 4"><path d="M4 0V4H0Z" fill="#d2d2d2"/></svg>
<svg class="a" style="left:53px;top:101px;" width="4" height="4" viewBox="0 0 4 4"><path d="M4 0V4H0Z" fill="#d2d2d2"/></svg>
<svg class="a" style="left:53px;top:123px;" width="4" height="4" viewBox="0 0 4 4"><path d="M4 0V4H0Z" fill="#d2d2d2"/></svg>
<svg class="a" style="left:26px;top:122px;" width="4" height="4" viewBox="0 0 4 4"><path d="M4 0V4H0Z" fill="#d2d2d2"/></svg>
<div class="a" style="left:6px;top:129px;width:52px;height:1px;background:#4c4c4c;"></div>
<div class="a" style="left:6px;top:221px;width:52px;height:1px;background:#4c4c4c;"></div>
<div class="a" style="left:6px;top:291px;width:52px;height:1px;background:#4c4c4c;"></div>
<div class="a" style="left:6px;top:339px;width:52px;height:1px;background:#4c4c4c;"></div>
<div class="a" style="left:6px;top:365px;width:52px;height:1px;background:#4c4c4c;"></div>
<div class="a" style="left:22px;top:436px;width:31px;height:31px;background:#000;border:1px solid #d6d6d6"></div>
<div class="a" style="left:29px;top:443px;width:17px;height:17px;background:#535353;border:1px solid #d6d6d6"></div>
<div class="a" style="left:5px;top:419px;width:32px;height:32px;background:#fff;border:1px solid #cfcfcf"></div>
<svg class="a" style="left:44px;top:420px;" width="12" height="12" viewBox="0 0 12 12"><path d="M2 3H7A3 3 0 0 1 10 6V10" stroke="#d2d2d2" stroke-width="1.3" fill="none"/><path d="M0 3L3 0V6Z M7 10H13L10 13Z" fill="#d2d2d2"/></svg>
<svg class="a" style="left:5px;top:456px;" width="12" height="12" viewBox="0 0 12 12"><rect x="4" y="4" width="7" height="7" fill="#000" stroke="#ddd" stroke-width="1"/><rect x="1" y="1" width="7" height="7" fill="#fff" stroke="#222" stroke-width="1"/></svg>
<div class="a" style="left:6px;top:475px;width:16px;height:16px;background:#3a3a3a;border-radius:1px"></div>
<div class="a" style="left:8px;top:477px;width:12px;height:12px;background:#fff;border:1px solid #222"></div>
<svg class="a" style="left:25px;top:476px;" width="14" height="14" viewBox="0 0 14 14"><defs><linearGradient id="gg"><stop offset="0" stop-color="#fff"/><stop offset="1" stop-color="#333"/></linearGradient></defs><rect x="1" y="1" width="12" height="12" fill="url(#gg)" stroke="#222" stroke-width="1"/></svg>
<svg class="a" style="left:43px;top:476px;" width="14" height="14" viewBox="0 0 14 14"><rect x="1" y="1" width="12" height="12" fill="#fff" stroke="#222" stroke-width="1"/><path d="M2 12L12 2" stroke="#e01010" stroke-width="2.5"/></svg>
<div class="a" style="left:6px;top:497px;width:16px;height:16px;background:#3a3a3a;border-radius:1px"></div>
<svg class="a" style="left:8px;top:499px;" width="13" height="13" viewBox="0 0 13 13"><circle cx="5" cy="5" r="4" stroke="#d6d6d6" stroke-width="1.2" fill="none"/><rect x="6.5" y="6.5" width="5" height="5" fill="#d6d6d6"/></svg>
<svg class="a" style="left:26px;top:499px;" width="13" height="13" viewBox="0 0 13 13"><circle cx="5" cy="5" r="4" stroke="#cfcfcf" stroke-width="1.2" fill="none"/><rect x="6.5" y="6.5" width="5" height="5" fill="#cfcfcf"/></svg>
<svg class="a" style="left:45px;top:499px;" width="13" height="13" viewBox="0 0 13 13"><circle cx="5" cy="5" r="4" stroke="#6a6a6a" stroke-width="1.2" fill="none"/><rect x="6.5" y="6.5" width="5" height="5" fill="#6a6a6a"/></svg>
<svg class="a" style="left:20px;top:520px;" width="23" height="18" viewBox="0 0 23 18"><rect x="1.5" y="6.5" width="13" height="10" stroke="#d2d2d2" stroke-width="1.2" fill="#535353"/><rect x="8.5" y="1.5" width="13" height="10" stroke="#d2d2d2" stroke-width="1.2" fill="#666"/></svg>
<div class="a" style="left:1016px;top:84px;width:14px;height:618px;background:#4b4b4b;"></div>
<svg class="a" style="left:1016px;top:86px;" width="14" height="12" viewBox="0 0 14 12"><path d="M3.5 8l3.5-3.5 3.5 3.5" stroke="#8a8a8a" stroke-width="1.5" fill="none"/></svg>
<svg class="a" style="left:1016px;top:687px;" width="14" height="12" viewBox="0 0 14 12"><path d="M3.5 4l3.5 3.5 3.5-3.5" stroke="#8a8a8a" stroke-width="1.5" fill="none"/></svg>
<div class="a" style="left:1017px;top:381px;width:12px;height:22px;background:#555;border-radius:6px;border:1px solid #5e5e5e"></div>
<div class="a" style="left:66px;top:702px;width:964px;height:15px;background:#4b4b4b;"></div>
<div class="a" style="left:67px;top:703px;width:49px;height:14px;background:#474747;"></div>
<div class="a" style="left:117px;top:703px;width:15px;height:14px;background:#474747;"></div>
<svg class="a" style="left:117px;top:703px;" width="15" height="14" viewBox="0 0 15 14"><path d="M4 5l3.5 3.5L11 5" stroke="#dcdcdc" stroke-width="1.6" fill="none"/></svg>
<svg class="a" style="left:138px;top:704px;" width="30" height="12" viewBox="0 0 30 12"><path d="M2.5 1.5V10.5M10 1.5L5 6L10 10.5Z" stroke="#666" fill="#666"/><path d="M24 1.5L19 6L24 10.5Z" fill="#666"/></svg>
<div class="a" style="left:168px;top:703px;width:40px;height:14px;background:#424242;"></div>
<div class="a" style="left:209px;top:703px;width:15px;height:14px;background:#474747;"></div>
<svg class="a" style="left:209px;top:703px;" width="15" height="14" viewBox="0 0 15 14"><path d="M4 5l3.5 3.5L11 5" stroke="#dcdcdc" stroke-width="1.6" fill="none"/></svg>
<svg class="a" style="left:228px;top:704px;" width="30" height="12" viewBox="0 0 30 12"><path d="M5 1.5L10 6L5 10.5Z" fill="#666"/><path d="M19 1.5L24 6L19 10.5Z M26.5 1.5V10.5" stroke="#666" fill="#666"/></svg>
<div class="a" style="left:262px;top:703px;width:1px;height:14px;background:#444;"></div>
<svg class="a" style="left:447px;top:704px;" width="30" height="12" viewBox="0 0 30 12"><path d="M4.5 1.5L9 6L4.5 10.5Z" fill="#cfcfcf"/><path d="M22 2L18 6L22 10" stroke="#8a8a8a" stroke-width="1.4" fill="none"/></svg>
<div class="a" style="left:726px;top:703px;width:25px;height:14px;background:#5a5a5a;border-radius:7px"></div>
<svg class="a" style="left:1003px;top:703px;" width="14" height="14" viewBox="0 0 14 14"><path d="M5 3l3.5 3.5L5 10" stroke="#8a8a8a" stroke-width="1.4" fill="none"/></svg>
<div class="a" style="left:1030px;top:57px;width:3px;height:660px;background:#363636;"></div>
<div class="a" style="left:1033px;top:57px;width:247px;height:13px;background:#424242;"></div>
<svg class="a" style="left:1266px;top:60px;" width="10" height="9" viewBox="0 0 10 9"><path d="M1 1.5L4.5 4.5L1 7.5ZM5 1.5L8.5 4.5L5 7.5Z" fill="#cfcfcf" stroke="#cfcfcf" stroke-width="0.6"/></svg>
<div class="a" style="left:1033px;top:70px;width:247px;height:25px;background:#424242;"></div>
<div class="a" style="left:1033px;top:70px;width:49px;height:25px;background:#454545;"></div>
<div class="a" style="left:1083px;top:70px;width:96px;height:25px;background:#454545;"></div>
<div class="a" style="left:1180px;top:70px;width:49px;height:25px;background:#535353;"></div>
<svg class="a" style="left:1263px;top:77px;" width="12" height="10" viewBox="0 0 12 10"><path d="M1 1.5H11M1 4H11M1 6.5H11M1 9H11" stroke="#b8b8b8" stroke-width="1"/></svg>
<div class="a" style="left:1033px;top:95px;width:247px;height:285px;background:#535353;"></div>
<div class="a" style="left:1038px;top:100px;width:236px;height:19px;background:#4f6786;"></div>
<svg class="a" style="left:1267px;top:100px;" width="7" height="7" viewBox="0 0 7 7"><path d="M0 0H7V7Z" fill="#e8e8e8"/></svg>
<div class="a" style="left:1038px;top:118px;width:236px;height:1px;background:#4a4a4a;"></div>
<svg class="a" style="left:1041px;top:105px;" width="12" height="9" viewBox="0 0 12 9"><path d="M0.5 4.5C2.5 1.5 4.5 0.8 6 0.8S9.5 1.5 11.5 4.5C9.5 7.5 7.5 8.2 6 8.2S2.5 7.5 0.5 4.5Z" fill="#c8c8c8"/><circle cx="6" cy="4.5" r="1.8" fill="#7a7a7a"/></svg>
<div class="a" style="left:1077px;top:102px;width:3px;height:15px;background:#4ce6ef;"></div>
<svg class="a" style="left:1086px;top:104px;" width="8" height="11" viewBox="0 0 8 11"><path d="M2.5 1.5L6 5.5L2.5 9.5" stroke="#d8d8d8" stroke-width="1.5" fill="none"/></svg>
<svg class="a" style="left:1246px;top:104px;" width="11" height="11" viewBox="0 0 11 11"><circle cx="5" cy="5.5" r="3.5" stroke="#d0d0d0" stroke-width="1.2" fill="none"/></svg>
<div class="a" style="left:1038px;top:138px;width:236px;height:1px;background:#4a4a4a;"></div>
<svg class="a" style="left:1041px;top:124px;" width="12" height="9" viewBox="0 0 12 9"><path d="M0.5 4.5C2.5 1.5 4.5 0.8 6 0.8S9.5 1.5 11.5 4.5C9.5 7.5 7.5 8.2 6 8.2S2.5 7.5 0.5 4.5Z" fill="#c8c8c8"/><circle cx="6" cy="4.5" r="1.8" fill="#7a7a7a"/></svg>
<div class="a" style="left:1077px;top:121px;width:3px;height:15px;background:#e74ee6;"></div>
<svg class="a" style="left:1086px;top:123px;" width="8" height="11" viewBox="0 0 8 11"><path d="M2.5 1.5L6 5.5L2.5 9.5" stroke="#d8d8d8" stroke-width="1.5" fill="none"/></svg>
<svg class="a" style="left:1246px;top:123px;" width="11" height="11" viewBox="0 0 11 11"><circle cx="5" cy="5.5" r="3.5" stroke="#d0d0d0" stroke-width="1.2" fill="none"/></svg>
<div class="a" style="left:1038px;top:157px;width:236px;height:1px;background:#4a4a4a;"></div>
<svg class="a" style="left:1041px;top:143px;" width="12" height="9" viewBox="0 0 12 9"><path d="M0.5 4.5C2.5 1.5 4.5 0.8 6 0.8S9.5 1.5 11.5 4.5C9.5 7.5 7.5 8.2 6 8.2S2.5 7.5 0.5 4.5Z" fill="#c8c8c8"/><circle cx="6" cy="4.5" r="1.8" fill="#7a7a7a"/></svg>
<div class="a" style="left:1077px;top:140px;width:3px;height:15px;background:#4d4df0;"></div>
<svg class="a" style="left:1086px;top:142px;" width="8" height="11" viewBox="0 0 8 11"><path d="M2.5 1.5L6 5.5L2.5 9.5" stroke="#d8d8d8" stroke-width="1.5" fill="none"/></svg>
<svg class="a" style="left:1246px;top:142px;" width="11" height="11" viewBox="0 0 11 11"><circle cx="5" cy="5.5" r="3.5" stroke="#d0d0d0" stroke-width="1.2" fill="none"/></svg>
<div class="a" style="left:1038px;top:176px;width:236px;height:1px;background:#4a4a4a;"></div>
<svg class="a" style="left:1041px;top:162px;" width="12" height="9" viewBox="0 0 12 9"><path d="M0.5 4.5C2.5 1.5 4.5 0.8 6 0.8S9.5 1.5 11.5 4.5C9.5 7.5 7.5 8.2 6 8.2S2.5 7.5 0.5 4.5Z" fill="#c8c8c8"/><circle cx="6" cy="4.5" r="1.8" fill="#7a7a7a"/></svg>
<div class="a" style="left:1077px;top:159px;width:3px;height:15px;background:#4fd84f;"></div>
<svg class="a" style="left:1086px;top:161px;" width="8" height="11" viewBox="0 0 8 11"><path d="M2.5 1.5L6 5.5L2.5 9.5" stroke="#d8d8d8" stroke-width="1.5" fill="none"/></svg>
<svg class="a" style="left:1246px;top:161px;" width="11" height="11" viewBox="0 0 11 11"><circle cx="5" cy="5.5" r="3.5" stroke="#d0d0d0" stroke-width="1.2" fill="none"/></svg>
<div class="a" style="left:1038px;top:195px;width:236px;height:1px;background:#4a4a4a;"></div>
<svg class="a" style="left:1041px;top:182px;" width="12" height="9" viewBox="0 0 12 9"><path d="M0.5 4.5C2.5 1.5 4.5 0.8 6 0.8S9.5 1.5 11.5 4.5C9.5 7.5 7.5 8.2 6 8.2S2.5 7.5 0.5 4.5Z" fill="#c8c8c8"/><circle cx="6" cy="4.5" r="1.8" fill="#7a7a7a"/></svg>
<div class="a" style="left:1077px;top:179px;width:3px;height:15px;background:#e35a3d;"></div>
<svg class="a" style="left:1086px;top:181px;" width="8" height="11" viewBox="0 0 8 11"><path d="M2.5 1.5L6 5.5L2.5 9.5" stroke="#d8d8d8" stroke-width="1.5" fill="none"/></svg>
<svg class="a" style="left:1246px;top:181px;" width="11" height="11" viewBox="0 0 11 11"><circle cx="5" cy="5.5" r="3.5" stroke="#d0d0d0" stroke-width="1.2" fill="none"/></svg>
<div class="a" style="left:1038px;top:214px;width:236px;height:1px;background:#4a4a4a;"></div>
<svg class="a" style="left:1041px;top:201px;" width="12" height="9" viewBox="0 0 12 9"><path d="M0.5 4.5C2.5 1.5 4.5 0.8 6 0.8S9.5 1.5 11.5 4.5C9.5 7.5 7.5 8.2 6 8.2S2.5 7.5 0.5 4.5Z" fill="#c8c8c8"/><circle cx="6" cy="4.5" r="1.8" fill="#7a7a7a"/></svg>
<div class="a" style="left:1077px;top:198px;width:3px;height:15px;background:#4d73f0;"></div>
<svg class="a" style="left:1086px;top:200px;" width="8" height="11" viewBox="0 0 8 11"><path d="M2.5 1.5L6 5.5L2.5 9.5" stroke="#d8d8d8" stroke-width="1.5" fill="none"/></svg>
<svg class="a" style="left:1246px;top:200px;" width="11" height="11" viewBox="0 0 11 11"><circle cx="5" cy="5.5" r="3.5" stroke="#d0d0d0" stroke-width="1.2" fill="none"/></svg>
<div class="a" style="left:1058px;top:119px;width:1px;height:95px;background:#4f4f4f;"></div>
<div class="a" style="left:1070px;top:119px;width:1px;height:95px;background:#4f4f4f;"></div>
<div class="a" style="left:1241px;top:119px;width:1px;height:95px;background:#4d4d4d;"></div>
<svg class="a" style="left:1104px;top:101px;" width="16" height="16" viewBox="0 0 16 16"><rect width="16" height="16" fill="#000"/><rect x="1" y="1" width="14" height="14" fill="#fff"/><g transform="translate(8 8) scale(0.158) translate(-604.4 -549.7)"><circle cx="604.5" cy="549.6" r="43.5" fill="#109fe1"/>
<rect x="582.6" y="511.9" width="43.7" height="75.9" fill="#e3007d"/>
<rect x="566.2" y="527.7" width="76.2" height="44" fill="#ffe600"/>
<path fill="#109fe1" d="M604.3 511.9A38.2 37.9 0 0 0 642.4 549.8A38.2 37.9 0 0 0 604.3 587.8A38.2 37.9 0 0 0 566.2 549.8A38.2 37.9 0 0 0 604.3 511.9Z"/></g></svg>
<svg class="a" style="left:1104px;top:120px;" width="16" height="16" viewBox="0 0 16 16"><rect width="16" height="16" fill="#000"/><rect x="1" y="1" width="14" height="14" fill="#fff"/><g transform="translate(8 8) scale(0.158) translate(-448.3 -549.8)"><mask id="c5t" maskUnits="userSpaceOnUse" x="0" y="0" width="1280" height="717"><path d="M420.3 521.8L476.3 577.8M476.3 521.8L420.3 577.8" stroke="#fff" stroke-width="23" stroke-linecap="round" fill="none"/></mask>
<path d="M420.3 521.8L476.3 577.8M476.3 521.8L420.3 577.8" stroke="#ffe600" stroke-width="22" stroke-linecap="round" fill="none"/>
<g mask="url(#c5t)" fill="#fff">
<circle cx="448.3" cy="504.99999999999994" r="23.1"/><circle cx="448.3" cy="594.5999999999999" r="23.1"/><circle cx="403.5" cy="549.8" r="23.1"/><circle cx="493.1" cy="549.8" r="23.1"/>
</g>
<circle cx="448.3" cy="549.8" r="38.4" fill="none" stroke="#109fe1" stroke-width="10.8"/>
<circle cx="448.3" cy="549.8" r="22.2" fill="#109fe1"/></g></svg>
<svg class="a" style="left:1104px;top:139px;" width="16" height="16" viewBox="0 0 16 16"><rect width="16" height="16" fill="#000"/><rect x="1" y="1" width="14" height="14" fill="#fff"/><g transform="translate(8 8) scale(0.158) translate(-604.5 -421.2)"><path fill="#e3007d" d="M604.5 421.2L566.4 383.1A54 54 0 0 1 642.6 383.1Z M604.5 421.2L566.4 459.3A54 54 0 0 0 642.6 459.3Z"/>
<g fill="#ffe600">
<rect x="588" y="377.1" width="33.2" height="27.8"/>
<rect x="561" y="404.9" width="27" height="32.6"/>
<rect x="621.2" y="404.9" width="26.8" height="32.6"/>
<rect x="588" y="437.5" width="33.2" height="28"/>
</g>
<path fill="#fff" d="M588 404.9L604.5 421.2L588 437.5Z M621.2 404.9L604.5 421.2L621.2 437.5Z"/></g></svg>
<svg class="a" style="left:1104px;top:158px;" width="16" height="16" viewBox="0 0 16 16"><rect width="16" height="16" fill="#000"/><rect x="1" y="1" width="14" height="14" fill="#fff"/><g transform="translate(8 8) scale(0.158) translate(-448.2 -421.3)"><rect x="404.4" y="377.7" width="87.6" height="87.3" fill="#109fe1"/>
<rect x="415" y="388.5" width="66" height="66.2" rx="5" fill="#fff"/>
<path fill-rule="evenodd" fill="#e3007d" d="M468.8 421.2A20.6 58 0 1 1 427.6 421.2A20.6 58 0 1 1 468.8 421.2Z M506.1 422A57.8 21.7 0 1 1 390.4 422A57.8 21.7 0 1 1 506.1 422Z"/></g></svg>
<svg class="a" style="left:1104px;top:178px;" width="16" height="16" viewBox="0 0 16 16"><rect width="16" height="16" fill="#000"/><rect x="1" y="1" width="14" height="14" fill="#fff"/><g transform="translate(8 8) scale(0.158) translate(-604.4 -287.5)"><path fill-rule="evenodd" fill="#109fe1" d="M560.6 244H648.1V331.4H560.6Z M654.1 287 A49.5 49.5 0 1 1 555 287 A49.5 49.5 0 1 1 654.1 287Z"/>
<rect x="571.5" y="254.4" width="66.2" height="65.7" fill="#109fe1"/>
<rect x="582.7" y="265.6" width="43.8" height="43.8" fill="#fff"/>
<rect x="593.6" y="276.5" width="22" height="22" fill="#109fe1"/></g></svg>
<svg class="a" style="left:1104px;top:197px;" width="16" height="16" viewBox="0 0 16 16"><rect width="16" height="16" fill="#000"/><rect x="1" y="1" width="14" height="14" fill="#fff"/><g transform="translate(8 8) scale(0.158) translate(-448.3 -287.2)"><polygon points="431,243 465,243 492,268 492,307 465,331 431,331 405,307 405,268" fill="#ffe600"/>
<rect x="431.5" y="271" width="33.5" height="34" fill="#fff"/>
<g fill="#109fe1">
<polygon points="406.2,265.8 427.2,244.8 448.2,265.8 427.2,286.8"/>
<polygon points="448.4,265.8 469.4,244.8 490.4,265.8 469.4,286.8"/>
<polygon points="406.2,308.2 427.2,287.2 448.2,308.2 427.2,329.2"/>
<polygon points="448.4,308.2 469.4,287.2 490.4,308.2 469.4,329.2"/>
</g></g></svg>
<div class="a" style="left:1033px;top:363px;width:247px;height:17px;background:#535353;"></div>
<svg class="a" style="left:1147px;top:365px;" width="110" height="14" viewBox="0 0 110 14"><circle cx="8" cy="6" r="4" stroke="#777" stroke-width="1.3" fill="none"/><path d="M5 9L2 12" stroke="#777" stroke-width="1.5"/><rect x="26.5" y="3.5" width="7" height="6" stroke="#cfcfcf" stroke-width="1" fill="none"/><rect x="29" y="6" width="7" height="6" fill="#cfcfcf"/><path d="M46 2V7H50M48 4V9" stroke="#cfcfcf" stroke-width="1.2" fill="none"/><rect x="52" y="3" width="8" height="9" fill="#cfcfcf"/><path d="M73 2H82V12H77V7H73Z" fill="#cfcfcf"/><path d="M97 3.5H107M99 3.5V12H105V3.5M100.5 2H103.5M101 5V11M103 5V11" stroke="#cfcfcf" stroke-width="1.1" fill="none"/></svg>
<div class="a" style="left:1033px;top:380px;width:247px;height:4px;background:#3a3a3a;"></div>
<div class="a" style="left:1033px;top:384px;width:247px;height:24px;background:#424242;"></div>
<div class="a" style="left:1033px;top:384px;width:70px;height:24px;background:#535353;"></div>
<svg class="a" style="left:1036px;top:390px;" width="7" height="12" viewBox="0 0 7 12"><path d="M1 4.5L3.5 1.5L6 4.5M1 7.5L3.5 10.5L6 7.5" stroke="#bbb" stroke-width="1.1" fill="none"/></svg>
<svg class="a" style="left:1263px;top:391px;" width="12" height="10" viewBox="0 0 12 10"><path d="M1 1.5H11M1 4H11M1 6.5H11M1 9H11" stroke="#b8b8b8" stroke-width="1"/></svg>
<div class="a" style="left:1033px;top:408px;width:247px;height:102px;background:#535353;"></div>
<div class="a" style="left:1037px;top:458px;width:238px;height:1px;background:#4a4a4a;"></div>
<svg class="a" style="left:1041px;top:433px;" width="18" height="18" viewBox="0 0 18 18"><path d="M1.5 0V18" stroke="#d0d0d0" stroke-width="1.2"/><rect x="3" y="4" width="7" height="4" fill="#d0d0d0"/><rect x="3" y="10" width="12" height="4" fill="#d0d0d0"/></svg>
<svg class="a" style="left:1074px;top:433px;" width="18" height="18" viewBox="0 0 18 18"><path d="M8 0V18" stroke="#d0d0d0" stroke-width="1.2"/><rect x="4.5" y="4" width="7" height="4" fill="#d0d0d0"/><rect x="2" y="10" width="12" height="4" fill="#d0d0d0"/></svg>
<svg class="a" style="left:1107px;top:433px;" width="18" height="18" viewBox="0 0 18 18"><path d="M15 0V18" stroke="#d0d0d0" stroke-width="1.2"/><rect x="7" y="4" width="7" height="4" fill="#d0d0d0"/><rect x="2" y="10" width="12" height="4" fill="#d0d0d0"/></svg>
<svg class="a" style="left:1188px;top:433px;" width="18" height="18" viewBox="0 0 18 18"><path d="M0 1.5H18" stroke="#d0d0d0" stroke-width="1.2"/><rect x="3" y="3" width="4" height="12" fill="#d0d0d0"/><rect x="9" y="3" width="4" height="7" fill="#d0d0d0"/></svg>
<svg class="a" style="left:1221px;top:433px;" width="18" height="18" viewBox="0 0 18 18"><path d="M0 8H18" stroke="#d0d0d0" stroke-width="1.2"/><rect x="4" y="2" width="4" height="12" fill="#d0d0d0"/><rect x="10" y="4.5" width="4" height="7" fill="#d0d0d0"/></svg>
<svg class="a" style="left:1254px;top:433px;" width="18" height="18" viewBox="0 0 18 18"><path d="M0 16H18" stroke="#d0d0d0" stroke-width="1.2"/><rect x="3" y="2" width="4" height="13" fill="#d0d0d0"/><rect x="9" y="8" width="4" height="7" fill="#d0d0d0"/></svg>
<svg class="a" style="left:1041px;top:484px;" width="18" height="18" viewBox="0 0 18 18"><path d="M0 1.5H18M0 9.5H18" stroke="#d0d0d0" stroke-width="1.2"/><rect x="4" y="3" width="8" height="4" fill="#d0d0d0"/><rect x="3" y="11" width="10" height="5" fill="#d0d0d0"/></svg>
<svg class="a" style="left:1074px;top:484px;" width="18" height="18" viewBox="0 0 18 18"><path d="M0 5H18M0 13H18" stroke="#d0d0d0" stroke-width="1.2"/><rect x="5" y="3" width="8" height="4" fill="#d0d0d0"/><rect x="4" y="11" width="10" height="5" fill="#d0d0d0"/></svg>
<svg class="a" style="left:1106px;top:484px;" width="18" height="18" viewBox="0 0 18 18"><path d="M0 5.5H18M0 16.5H18" stroke="#d0d0d0" stroke-width="1.2"/><rect x="6" y="1" width="7" height="4" fill="#d0d0d0"/><rect x="5" y="10" width="9" height="5" fill="#d0d0d0"/></svg>
<svg class="a" style="left:1188px;top:484px;" width="18" height="18" viewBox="0 0 18 18"><path d="M1.5 0V18M9.5 0V18" stroke="#d0d0d0" stroke-width="1.2"/><rect x="3" y="3" width="5" height="12" fill="#d0d0d0"/><rect x="11" y="5" width="4" height="8" fill="#d0d0d0"/></svg>
<svg class="a" style="left:1220px;top:484px;" width="18" height="18" viewBox="0 0 18 18"><path d="M5.5 0V18M13.5 0V18" stroke="#d0d0d0" stroke-width="1.2"/><rect x="3.5" y="3" width="4" height="12" fill="#d0d0d0"/><rect x="11.5" y="5" width="4" height="8" fill="#d0d0d0"/></svg>
<svg class="a" style="left:1253px;top:484px;" width="18" height="18" viewBox="0 0 18 18"><path d="M9.5 0V18M16.5 0V18" stroke="#d0d0d0" stroke-width="1.2"/><rect x="3" y="3" width="5" height="12" fill="#d0d0d0"/><rect x="11" y="5" width="4" height="8" fill="#d0d0d0"/></svg>
<div class="a" style="left:1033px;top:510px;width:247px;height:2px;background:#3a3a3a;"></div>
<div class="a" style="left:1033px;top:512px;width:247px;height:24px;background:#424242;"></div>
<div class="a" style="left:1033px;top:512px;width:61px;height:24px;background:#535353;"></div>
<svg class="a" style="left:1263px;top:519px;" width="12" height="10" viewBox="0 0 12 10"><path d="M1 1.5H11M1 4H11M1 6.5H11M1 9H11" stroke="#b8b8b8" stroke-width="1"/></svg>
<div class="a" style="left:1033px;top:536px;width:247px;height:94px;background:#535353;"></div>
<svg class="a" style="left:1043px;top:564px;" width="14" height="14" viewBox="0 0 14 14"><rect x="1" y="1" width="9" height="9" fill="#d0d0d0"/><rect x="4" y="4" width="9" height="9" fill="#d0d0d0"/></svg>
<svg class="a" style="left:1075px;top:564px;" width="14" height="14" viewBox="0 0 14 14"><rect x="1" y="1" width="9" height="9" fill="#d0d0d0"/><rect x="4.5" y="4.5" width="8" height="8" fill="#535353" stroke="#d0d0d0" stroke-width="1"/></svg>
<svg class="a" style="left:1107px;top:564px;" width="14" height="14" viewBox="0 0 14 14"><rect x="1.5" y="1.5" width="8" height="8" fill="none" stroke="#d0d0d0" stroke-width="1"/><rect x="4.5" y="4.5" width="8" height="8" fill="none" stroke="#d0d0d0" stroke-width="1"/><rect x="4.5" y="4.5" width="5" height="5" fill="#d0d0d0"/></svg>
<svg class="a" style="left:1139px;top:564px;" width="14" height="14" viewBox="0 0 14 14"><rect x="1" y="1" width="9" height="9" fill="#d0d0d0"/><rect x="4" y="4" width="9" height="9" fill="#d0d0d0"/><rect x="4" y="4" width="6" height="6" fill="#535353"/></svg>
<div class="a" style="left:1165px;top:561px;width:72px;height:17px;background:#515151;border:1px solid #5a5a5a"></div>
<svg class="a" style="left:1045.0px;top:608px;" width="14" height="14" viewBox="0 0 14 14"><rect x="1.5" y="1.5" width="8" height="8" fill="none" stroke="#d0d0d0"/><rect x="4.5" y="4.5" width="8" height="8" fill="none" stroke="#d0d0d0"/><rect x="5" y="5" width="4" height="4" fill="#d0d0d0"/></svg>
<svg class="a" style="left:1079.2px;top:608px;" width="14" height="14" viewBox="0 0 14 14"><rect x="1" y="1" width="9" height="9" fill="#d0d0d0"/><rect x="4" y="4" width="9" height="9" fill="#d0d0d0" stroke="#535353"/></svg>
<svg class="a" style="left:1113.4px;top:608px;" width="14" height="14" viewBox="0 0 14 14"><rect x="1" y="1" width="9" height="9" fill="#d0d0d0"/><rect x="4" y="4" width="9" height="9" fill="#d0d0d0"/></svg>
<svg class="a" style="left:1147.6px;top:608px;" width="14" height="14" viewBox="0 0 14 14"><rect x="1.5" y="1.5" width="8" height="8" fill="none" stroke="#d0d0d0"/><rect x="4.5" y="4.5" width="8" height="8" fill="none" stroke="#d0d0d0"/><rect x="4.5" y="4.5" width="5" height="5" fill="#d0d0d0"/></svg>
<svg class="a" style="left:1181.8px;top:608px;" width="14" height="14" viewBox="0 0 14 14"><rect x="1.5" y="1.5" width="8" height="8" fill="none" stroke="#d0d0d0"/><rect x="4.5" y="4.5" width="8" height="8" fill="none" stroke="#d0d0d0"/></svg>
<svg class="a" style="left:1216.0px;top:608px;" width="14" height="14" viewBox="0 0 14 14"><rect x="1.5" y="1.5" width="8" height="8" fill="none" stroke="#d0d0d0"/><rect x="4" y="4" width="9" height="9" fill="#d0d0d0"/></svg>
<div class="a" style="left:1033px;top:630px;width:247px;height:4px;background:#3a3a3a;"></div>
<div class="a" style="left:1033px;top:634px;width:247px;height:24px;background:#424242;"></div>
<div class="a" style="left:1033px;top:634px;width:56px;height:24px;background:#535353;"></div>
<svg class="a" style="left:1036px;top:640px;" width="7" height="12" viewBox="0 0 7 12"><path d="M1 4.5L3.5 1.5L6 4.5M1 7.5L3.5 10.5L6 7.5" stroke="#bbb" stroke-width="1.1" fill="none"/></svg>
<div class="a" style="left:1090px;top:634px;width:1px;height:24px;background:#3a3a3a;"></div>
<div class="a" style="left:1143px;top:634px;width:1px;height:24px;background:#3a3a3a;"></div>
<div class="a" style="left:1189px;top:634px;width:1px;height:24px;background:#3a3a3a;"></div>
<div class="a" style="left:1242px;top:634px;width:1px;height:24px;background:#3a3a3a;"></div>
<svg class="a" style="left:1263px;top:641px;" width="12" height="10" viewBox="0 0 12 10"><path d="M1 1.5H11M1 4H11M1 6.5H11M1 9H11" stroke="#b8b8b8" stroke-width="1"/></svg>
<div class="a" style="left:1033px;top:658px;width:247px;height:4px;background:#3a3a3a;"></div>
<div class="a" style="left:1033px;top:662px;width:247px;height:25px;background:#424242;"></div>
<div class="a" style="left:1085px;top:662px;width:77px;height:25px;background:#535353;"></div>
<svg class="a" style="left:1088px;top:668px;" width="7" height="12" viewBox="0 0 7 12"><path d="M1 4.5L3.5 1.5L6 4.5M1 7.5L3.5 10.5L6 7.5" stroke="#bbb" stroke-width="1.1" fill="none"/></svg>
<svg class="a" style="left:1263px;top:670px;" width="12" height="10" viewBox="0 0 12 10"><path d="M1 1.5H11M1 4H11M1 6.5H11M1 9H11" stroke="#b8b8b8" stroke-width="1"/></svg>
<div class="a" style="left:1033px;top:687px;width:247px;height:4px;background:#3a3a3a;"></div>
<div class="a" style="left:1033px;top:691px;width:247px;height:26px;background:#424242;"></div>
<div class="a" style="left:1033px;top:691px;width:109px;height:26px;background:#535353;"></div>
<div class="a" style="left:1143px;top:691px;width:77px;height:26px;background:#454545;"></div>
<svg class="a" style="left:1263px;top:698px;" width="12" height="10" viewBox="0 0 12 10"><path d="M1 1.5H11M1 4H11M1 6.5H11M1 9H11" stroke="#b8b8b8" stroke-width="1"/></svg>
<div class="a" style="left:1276px;top:57px;width:4px;height:660px;background:#3f3f3f;"></div>
<svg class="a" style="left:0;top:0" width="1280" height="717"><text x="104.5" y="97.5" font-size="9" fill="#a8a8a8" font-weight="400" stroke="#a8a8a8" stroke-width="0.05">150</text><text x="190.70000000000002" y="97.5" font-size="9" fill="#a8a8a8" font-weight="400" stroke="#a8a8a8" stroke-width="0.05">100</text><text x="276.90000000000003" y="97.5" font-size="9" fill="#a8a8a8" font-weight="400" stroke="#a8a8a8" stroke-width="0.05">50</text><text x="363.1" y="97.5" font-size="9" fill="#a8a8a8" font-weight="400" stroke="#a8a8a8" stroke-width="0.05">0</text><text x="449.3" y="97.5" font-size="9" fill="#a8a8a8" font-weight="400" stroke="#a8a8a8" stroke-width="0.05">50</text><text x="535.5" y="97.5" font-size="9" fill="#a8a8a8" font-weight="400" stroke="#a8a8a8" stroke-width="0.05">100</text><text x="621.7" y="97.5" font-size="9" fill="#a8a8a8" font-weight="400" stroke="#a8a8a8" stroke-width="0.05">150</text><text x="707.9000000000001" y="97.5" font-size="9" fill="#a8a8a8" font-weight="400" stroke="#a8a8a8" stroke-width="0.05">200</text><text x="794.1" y="97.5" font-size="9" fill="#a8a8a8" font-weight="400" stroke="#a8a8a8" stroke-width="0.05">250</text><text x="880.3000000000001" y="97.5" font-size="9" fill="#a8a8a8" font-weight="400" stroke="#a8a8a8" stroke-width="0.05">300</text><text x="966.5" y="97.5" font-size="9" fill="#a8a8a8" font-weight="400" stroke="#a8a8a8" stroke-width="0.05">350</text><text x="68.5" y="147.9" font-size="9" fill="#a8a8a8" font-weight="400" stroke="#a8a8a8" stroke-width="0.05">0</text><text x="68.5" y="225.50000000000003" font-size="9" fill="#a8a8a8" font-weight="400" stroke="#a8a8a8" stroke-width="0.05">5</text><text x="68.5" y="234.10000000000002" font-size="9" fill="#a8a8a8" font-weight="400" stroke="#a8a8a8" stroke-width="0.05">0</text><text x="68.5" y="303.1" font-size="9" fill="#a8a8a8" font-weight="400" stroke="#a8a8a8" stroke-width="0.05">1</text><text x="68.5" y="311.7" font-size="9" fill="#a8a8a8" font-weight="400" stroke="#a8a8a8" stroke-width="0.05">0</text><text x="68.5" y="320.3" font-size="9" fill="#a8a8a8" font-weight="400" stroke="#a8a8a8" stroke-width="0.05">0</text><text x="68.5" y="389.3" font-size="9" fill="#a8a8a8" font-weight="400" stroke="#a8a8a8" stroke-width="0.05">1</text><text x="68.5" y="397.9" font-size="9" fill="#a8a8a8" font-weight="400" stroke="#a8a8a8" stroke-width="0.05">5</text><text x="68.5" y="406.5" font-size="9" fill="#a8a8a8" font-weight="400" stroke="#a8a8a8" stroke-width="0.05">0</text><text x="68.5" y="475.50000000000006" font-size="9" fill="#a8a8a8" font-weight="400" stroke="#a8a8a8" stroke-width="0.05">2</text><text x="68.5" y="484.1" font-size="9" fill="#a8a8a8" font-weight="400" stroke="#a8a8a8" stroke-width="0.05">0</text><text x="68.5" y="492.70000000000005" font-size="9" fill="#a8a8a8" font-weight="400" stroke="#a8a8a8" stroke-width="0.05">0</text><text x="68.5" y="561.6999999999999" font-size="9" fill="#a8a8a8" font-weight="400" stroke="#a8a8a8" stroke-width="0.05">2</text><text x="68.5" y="570.3" font-size="9" fill="#a8a8a8" font-weight="400" stroke="#a8a8a8" stroke-width="0.05">5</text><text x="68.5" y="578.9" font-size="9" fill="#a8a8a8" font-weight="400" stroke="#a8a8a8" stroke-width="0.05">0</text><text x="68.5" y="647.9" font-size="9" fill="#a8a8a8" font-weight="400" stroke="#a8a8a8" stroke-width="0.05">3</text><text x="68.5" y="656.5" font-size="9" fill="#a8a8a8" font-weight="400" stroke="#a8a8a8" stroke-width="0.05">0</text><text x="68.5" y="665.1" font-size="9" fill="#a8a8a8" font-weight="400" stroke="#a8a8a8" stroke-width="0.05">0</text><text x="7" y="18.5" font-size="17" fill="#c3875d" font-weight="400" textLength="17" lengthAdjust="spacingAndGlyphs" stroke="#c3875d" stroke-width="0.3">Ai</text><text x="42" y="16.5" font-size="11.5" fill="#e0e0e0" font-weight="400" textLength="32" lengthAdjust="spacingAndGlyphs" stroke="#e0e0e0" stroke-width="0.1">Fichier</text><text x="89" y="16.5" font-size="11.5" fill="#e0e0e0" font-weight="400" textLength="33" lengthAdjust="spacingAndGlyphs" stroke="#e0e0e0" stroke-width="0.1">Edition</text><text x="138" y="16.5" font-size="11.5" fill="#e0e0e0" font-weight="400" textLength="27" lengthAdjust="spacingAndGlyphs" stroke="#e0e0e0" stroke-width="0.1">Objet</text><text x="181" y="16.5" font-size="11.5" fill="#e0e0e0" font-weight="400" textLength="25" lengthAdjust="spacingAndGlyphs" stroke="#e0e0e0" stroke-width="0.1">Texte</text><text x="223" y="16.5" font-size="11.5" fill="#e0e0e0" font-weight="400" textLength="44" lengthAdjust="spacingAndGlyphs" stroke="#e0e0e0" stroke-width="0.1">Sélection</text><text x="284" y="16.5" font-size="11.5" fill="#e0e0e0" font-weight="400" textLength="21" lengthAdjust="spacingAndGlyphs" stroke="#e0e0e0" stroke-width="0.1">Effet</text><text x="321" y="16.5" font-size="11.5" fill="#e0e0e0" font-weight="400" textLength="46" lengthAdjust="spacingAndGlyphs" stroke="#e0e0e0" stroke-width="0.1">Affichage</text><text x="383" y="16.5" font-size="11.5" fill="#e0e0e0" font-weight="400" textLength="36" lengthAdjust="spacingAndGlyphs" stroke="#e0e0e0" stroke-width="0.1">Fenêtre</text><text x="435" y="16.5" font-size="11.5" fill="#e0e0e0" font-weight="400" textLength="22" lengthAdjust="spacingAndGlyphs" stroke="#e0e0e0" stroke-width="0.1">Aide</text><text x="485.5" y="17.5" font-size="11" fill="#555" font-weight="400" textLength="13" lengthAdjust="spacingAndGlyphs" stroke="#555" stroke-width="0.2">Br</text><text x="519" y="17.5" font-size="11" fill="#3a3a3a" font-weight="400" textLength="12" lengthAdjust="spacingAndGlyphs" stroke="#3a3a3a" stroke-width="0.3">St</text><text x="896" y="16.5" font-size="11.5" fill="#dcdcdc" font-weight="400" textLength="89" lengthAdjust="spacingAndGlyphs" stroke="#dcdcdc" stroke-width="0.1">Les indispensables</text><text x="1045" y="15.5" font-size="10.5" fill="#6e6e6e" font-weight="400" textLength="124" lengthAdjust="spacingAndGlyphs" stroke="#6e6e6e" stroke-width="0.1">Rechercher dans Adobe Stock</text><text x="13" y="44.5" font-size="10" fill="#d4d4d4" font-weight="400" textLength="67" lengthAdjust="spacingAndGlyphs" stroke="#d4d4d4" stroke-width="0.3">Aucune sélection</text><text x="174" y="46.5" font-size="10" fill="#d4d4d4" font-weight="400" textLength="38" lengthAdjust="spacingAndGlyphs" stroke="#d4d4d4" stroke-width="0.3">Contour :</text><text x="237" y="46" font-size="10.5" fill="#e0e0e0" font-weight="400" textLength="15" lengthAdjust="spacingAndGlyphs" stroke="#e0e0e0" stroke-width="0.3">1 pt</text><text x="337" y="46" font-size="10" fill="#2a2a2a" font-weight="400" textLength="37" lengthAdjust="spacingAndGlyphs" stroke="#2a2a2a" stroke-width="0.3">Uniforme</text><text x="423" y="46" font-size="10" fill="#2a2a2a" font-weight="400" textLength="49" lengthAdjust="spacingAndGlyphs" stroke="#2a2a2a" stroke-width="0.3">Arrondi 5 pt</text><text x="503" y="46.5" font-size="10" fill="#d4d4d4" font-weight="400" textLength="37" lengthAdjust="spacingAndGlyphs" stroke="#d4d4d4" stroke-width="0.3">Opacité :</text><text x="549" y="46" font-size="10.5" fill="#e0e0e0" font-weight="400" textLength="23" lengthAdjust="spacingAndGlyphs" stroke="#e0e0e0" stroke-width="0.3">100%</text><text x="613" y="46" font-size="10" fill="#cfcfcf" font-weight="400" textLength="26" lengthAdjust="spacingAndGlyphs" stroke="#cfcfcf" stroke-width="0.3">Style :</text><text x="700" y="46.5" font-size="10.5" fill="#e6e6e6" font-weight="400" textLength="84" lengthAdjust="spacingAndGlyphs" stroke="#e6e6e6" stroke-width="0.3">Format de document</text><text x="806" y="46.5" font-size="10.5" fill="#e6e6e6" font-weight="400" textLength="48" lengthAdjust="spacingAndGlyphs" stroke="#e6e6e6" stroke-width="0.3">Préférences</text><text x="75" y="76" font-size="11" fill="#e8e8e8" font-weight="400" textLength="209" lengthAdjust="spacingAndGlyphs" stroke="#e8e8e8" stroke-width="0.4">exercice_motifs.ai @ 66,67% (CMJN/Aperçu)</text><text x="73" y="715" font-size="10" fill="#d6d6d6" font-weight="400" textLength="30" lengthAdjust="spacingAndGlyphs" stroke="#d6d6d6" stroke-width="0.3">66,67%</text><text x="172" y="715" font-size="10" fill="#e6e6e6" font-weight="400" textLength="6" lengthAdjust="spacingAndGlyphs" stroke="#e6e6e6" stroke-width="0.3">1</text><text x="335" y="715" font-size="10" fill="#cfcfcf" font-weight="400" textLength="35" lengthAdjust="spacingAndGlyphs" stroke="#cfcfcf" stroke-width="0.3">Sélection</text><text x="1041" y="86" font-size="10" fill="#9c9c9c" font-weight="400" textLength="33" lengthAdjust="spacingAndGlyphs" stroke="#9c9c9c" stroke-width="0.3">Couleur</text><text x="1091" y="86" font-size="10" fill="#9c9c9c" font-weight="400" textLength="80" lengthAdjust="spacingAndGlyphs" stroke="#9c9c9c" stroke-width="0.3">Guide des couleurs</text><text x="1188" y="86" font-size="10" fill="#f0f0f0" font-weight="700" textLength="32" lengthAdjust="spacingAndGlyphs">Calques</text><text x="1125" y="113.5" font-size="10" fill="#e6e6e6" font-weight="400" textLength="35" lengthAdjust="spacingAndGlyphs" stroke="#e6e6e6" stroke-width="0.3">Calque 6</text><text x="1125" y="132.5" font-size="10" fill="#e6e6e6" font-weight="400" textLength="28" lengthAdjust="spacingAndGlyphs" stroke="#e6e6e6" stroke-width="0.3">motif 5</text><text x="1125" y="151.5" font-size="10" fill="#e6e6e6" font-weight="400" textLength="28" lengthAdjust="spacingAndGlyphs" stroke="#e6e6e6" stroke-width="0.3">motif 4</text><text x="1125" y="170.5" font-size="10" fill="#e6e6e6" font-weight="400" textLength="28" lengthAdjust="spacingAndGlyphs" stroke="#e6e6e6" stroke-width="0.3">motif 3</text><text x="1125" y="190.5" font-size="10" fill="#e6e6e6" font-weight="400" textLength="28" lengthAdjust="spacingAndGlyphs" stroke="#e6e6e6" stroke-width="0.3">motif 2</text><text x="1125" y="209.5" font-size="10" fill="#e6e6e6" font-weight="400" textLength="28" lengthAdjust="spacingAndGlyphs" stroke="#e6e6e6" stroke-width="0.3">motif 1</text><text x="1037" y="376" font-size="10" fill="#cfcfcf" font-weight="400" textLength="40" lengthAdjust="spacingAndGlyphs" stroke="#cfcfcf" stroke-width="0.3">6 Calques</text><text x="1046" y="400" font-size="10" fill="#f0f0f0" font-weight="700" textLength="50" lengthAdjust="spacingAndGlyphs">Alignement</text><text x="1037" y="424" font-size="10" fill="#cfcfcf" font-weight="400" textLength="96" lengthAdjust="spacingAndGlyphs" stroke="#cfcfcf" stroke-width="0.3">Alignement des objets :</text><text x="1037" y="475" font-size="10" fill="#cfcfcf" font-weight="400" textLength="95" lengthAdjust="spacingAndGlyphs" stroke="#cfcfcf" stroke-width="0.3">Répartition des objets :</text><text x="1041" y="528" font-size="10" fill="#f0f0f0" font-weight="700" textLength="46" lengthAdjust="spacingAndGlyphs">Pathfinder</text><text x="1037" y="553" font-size="10" fill="#cfcfcf" font-weight="400" textLength="81" lengthAdjust="spacingAndGlyphs" stroke="#cfcfcf" stroke-width="0.3">Modes de la forme :</text><text x="1037" y="598" font-size="10" fill="#cfcfcf" font-weight="400" textLength="51" lengthAdjust="spacingAndGlyphs" stroke="#cfcfcf" stroke-width="0.3">Pathfinders :</text><text x="1176" y="574" font-size="9.5" fill="#6f6f6f" font-weight="400" textLength="50" lengthAdjust="spacingAndGlyphs" stroke="#6f6f6f" stroke-width="0.3">Décomposer</text><text x="1047" y="650" font-size="10" fill="#f0f0f0" font-weight="700" textLength="37" lengthAdjust="spacingAndGlyphs">Contour</text><text x="1097" y="650" font-size="10" fill="#a0a0a0" font-weight="400" textLength="39" lengthAdjust="spacingAndGlyphs" stroke="#a0a0a0" stroke-width="0.3">Nuancier</text><text x="1152" y="650" font-size="10" fill="#a0a0a0" font-weight="400" textLength="31" lengthAdjust="spacingAndGlyphs" stroke="#a0a0a0" stroke-width="0.3">Formes</text><text x="1197" y="650" font-size="10" fill="#a0a0a0" font-weight="400" textLength="41" lengthAdjust="spacingAndGlyphs" stroke="#a0a0a0" stroke-width="0.3">Symboles</text><text x="1041" y="678" font-size="10" fill="#a0a0a0" font-weight="400" textLength="36" lengthAdjust="spacingAndGlyphs" stroke="#a0a0a0" stroke-width="0.3">Dégradé</text><text x="1099" y="678" font-size="10" fill="#f0f0f0" font-weight="700" textLength="56" lengthAdjust="spacingAndGlyphs">Transparence</text><text x="1042" y="706" font-size="10" fill="#f0f0f0" font-weight="700" textLength="92" lengthAdjust="spacingAndGlyphs">Exportation de fichier</text><text x="1151" y="706" font-size="10" fill="#a0a0a0" font-weight="400" textLength="64" lengthAdjust="spacingAndGlyphs" stroke="#a0a0a0" stroke-width="0.3">Plans de travail</text></svg>
</body></html>
